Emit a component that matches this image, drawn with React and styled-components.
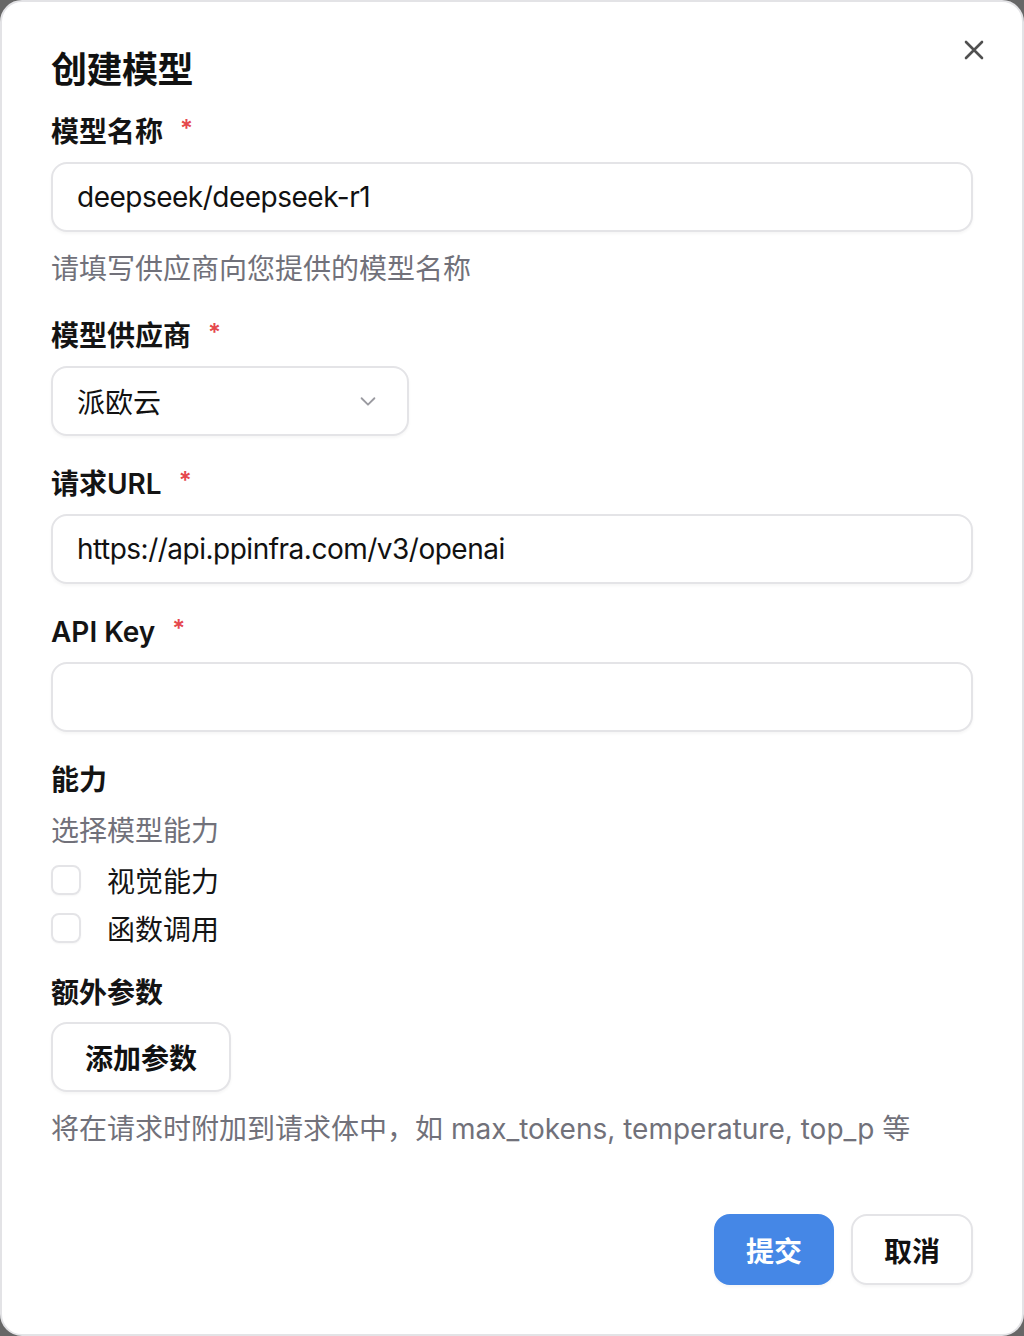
import React from 'react'
import styled, { createGlobalStyle } from 'styled-components'

const GlobalStyle = createGlobalStyle`
  html, body {
    margin: 0;
    padding: 0;
    background: #676767;
  }
  body {
    font-family: Inter, "Noto Sans CJK SC", "Noto Sans", sans-serif;
    color: #111;
  }
  * {
    box-sizing: border-box;
  }
`

const Dialog = styled.div`
  position: relative;
  width: 1024px;
  height: 1336px;
  background: #fff;
  border: 2px solid #e3e3e6;
  border-radius: 22px;
  padding: 40px 49px 49px;
  display: flex;
  flex-direction: column;
`

const Title = styled.h2`
  margin: 0;
  font-size: 36px;
  line-height: 56px;
  font-weight: 700;
  letter-spacing: -0.5px;
`

const CloseButton = styled.button`
  position: absolute;
  top: 34px;
  right: 34px;
  width: 28px;
  height: 28px;
  padding: 0;
  border: 0;
  background: transparent;
  display: flex;
  align-items: center;
  justify-content: center;
`

const Form = styled.div`
  display: flex;
  flex-direction: column;
  margin-top: 14px;
`

const Field = styled.div`
  display: flex;
  flex-direction: column;
  margin-top: ${(p) => p.$top || 0}px;
`

const Label = styled.div`
  display: flex;
  align-items: center;
  font-size: 28px;
  line-height: 40px;
  font-weight: 600;
  color: #141414;
`

const Required = styled.span`
  color: #e5484d;
  font-size: 24px;
  margin-left: 17px;
  margin-top: -6px;
`

const Box = styled.div`
  display: flex;
  align-items: center;
  height: 70px;
  width: ${(p) => (p.$width ? `${p.$width}px` : '100%')};
  margin-top: 10px;
  padding: 0 24px;
  border: 2px solid #e4e4e7;
  border-radius: 16px;
  background: #fff;
  box-shadow: 0 2px 3px rgba(0, 0, 0, 0.04);
  font-size: 28px;
  letter-spacing: -0.5px;
  color: #111;
`

const SelectBox = styled(Box)`
  justify-content: space-between;
  padding-right: 28px;
  letter-spacing: 0;
`

const Hint = styled.div`
  margin-top: ${(p) => p.$top ?? 17}px;
  font-size: 28px;
  line-height: 40px;
  color: #71717a;
`

const CheckRow = styled.label`
  display: flex;
  align-items: center;
  gap: 26px;
  height: 40px;
  margin-top: ${(p) => p.$top}px;
  font-size: 28px;
  color: #141414;
`

const CheckBox = styled.span`
  width: 30px;
  height: 30px;
  border: 2px solid #e4e4e7;
  border-radius: 8px;
  box-shadow: 0 1px 2px rgba(0, 0, 0, 0.04);
`

const Button = styled.button`
  height: 71px;
  padding: 0 ${(p) => p.$pad || 32}px;
  border-radius: 16px;
  font-family: inherit;
  font-size: 28px;
  font-weight: 700;
  border: 2px solid ${(p) => (p.$primary ? '#4587e6' : '#e4e4e7')};
  background: ${(p) => (p.$primary ? '#4587e6' : '#fff')};
  color: ${(p) => (p.$primary ? '#fff' : '#111')};
  box-shadow: 0 2px 3px rgba(0, 0, 0, 0.04);
`

const AddButton = styled(Button)`
  align-self: flex-start;
  margin-top: 9px;
  height: 70px;
`

const Footer = styled.div`
  display: flex;
  justify-content: flex-end;
  gap: 17px;
  margin-top: auto;
`

const Chevron = () => (
  <svg width="22" height="22" viewBox="0 0 24 24" fill="none" stroke="#9a9aa0" strokeWidth="2" strokeLinecap="round" strokeLinejoin="round">
    <path d="M5 9l7 7 7-7" />
  </svg>
)

const CloseIcon = () => (
  <svg width="22" height="22" viewBox="0 0 22 22" fill="none" stroke="#505050" strokeWidth="2.6" strokeLinecap="round">
    <path d="M3 3l16 16M19 3L3 19" />
  </svg>
)

export default function App() {
  return (
    <>
      <GlobalStyle />
      <Dialog>
        <Title>创建模型</Title>
        <CloseButton>
          <CloseIcon />
        </CloseButton>

        <Form>
          <Field>
            <Label>
              模型名称<Required>*</Required>
            </Label>
            <Box>deepseek/deepseek-r1</Box>
            <Hint>请填写供应商向您提供的模型名称</Hint>
          </Field>

          <Field $top={27}>
            <Label>
              模型供应商<Required>*</Required>
            </Label>
            <SelectBox $width={358}>
              派欧云
              <Chevron />
            </SelectBox>
          </Field>

          <Field $top={28}>
            <Label>
              请求URL<Required>*</Required>
            </Label>
            <Box>https://api.ppinfra.com/v3/openai</Box>
          </Field>

          <Field $top={28}>
            <Label>
              API Key<Required>*</Required>
            </Label>
            <Box />
          </Field>

          <Field $top={28}>
            <Label>能力</Label>
            <Hint $top={11}>选择模型能力</Hint>
            <CheckRow $top={9}>
              <CheckBox />
              视觉能力
            </CheckRow>
            <CheckRow $top={8}>
              <CheckBox />
              函数调用
            </CheckRow>
          </Field>

          <Field $top={25}>
            <Label>额外参数</Label>
            <AddButton $pad={32}>添加参数</AddButton>
            <Hint>将在请求时附加到请求体中，如 max_tokens, temperature, top_p 等</Hint>
          </Field>
        </Form>

        <Footer>
          <Button $primary $pad={30}>提交</Button>
          <Button $pad={31}>取消</Button>
        </Footer>
      </Dialog>
    </>
  )
}
